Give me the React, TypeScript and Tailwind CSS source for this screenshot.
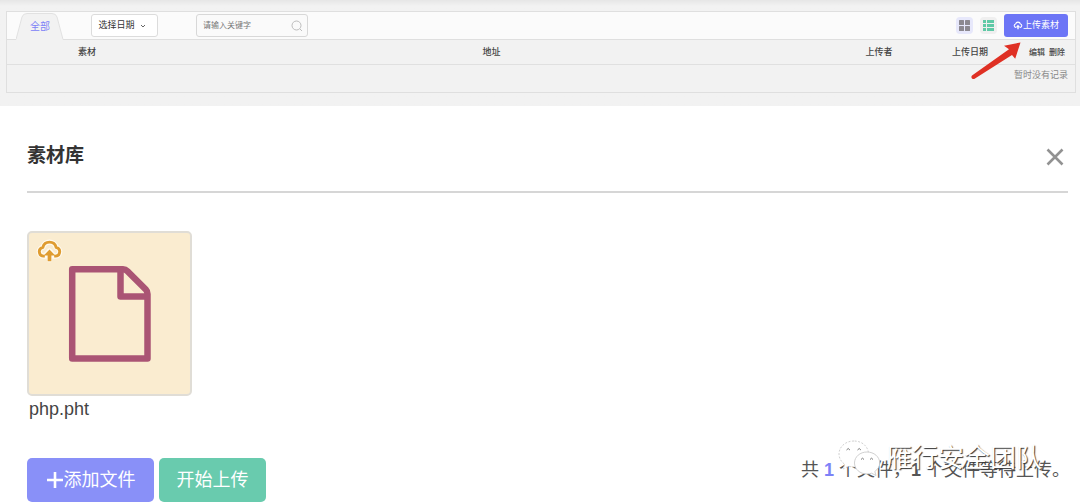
import { useState } from "react";

function CloudUpload({ className, halo = false }: { className: string; halo?: boolean }) {
  const cloud = "M7.5 15.5H6.2a4.3 4.3 0 0 1-.6-8.5 6.6 6.6 0 0 1 12.8 0 4.3 4.3 0 0 1-.6 8.5h-1.3";
  return (
    <svg viewBox="-1 0 26 24" className={className} fill="none" aria-hidden="true">
      {halo && (
        <g stroke="#fffaf0" strokeWidth="5" strokeLinejoin="round" strokeLinecap="round">
          <path d={cloud} />
          <path d="M12 19v-5M8 15l4-4.500 4 4.500z" />
        </g>
      )}
      <path d={cloud} stroke="currentColor" strokeWidth="2.800" />
      <path d="M12 9l5.500 6H13.800v5.500h-3.600V15H6.500z" fill="currentColor" />
    </svg>
  );
}

function Toolbar() {
  const [keyword, setKeyword] = useState("");
  return (
    <div className="flex h-7 items-center border-b border-[#dfdfdf] bg-[#fbfbfb] pr-[7px] pl-[9px]">
      <a
        href="#all"
        className="relative -mb-px flex h-[27px] w-12 items-center justify-center self-end text-[10px] text-[#7d82f7]"
      >
        <svg viewBox="0 0 48 27" className="absolute inset-0 h-full w-full" aria-hidden="true">
          <path
            d="M0 26.500L6 4Q7 .5 11 .5H36Q40 .5 41 4L47 26.500V27H0Z"
            fill="#f2f2f2"
          />
          <path d="M0 26.500L6 4Q7 .5 11 .5H36Q40 .5 41 4L47 26.500" fill="none" stroke="#e1e1e1" />
        </svg>
        <span className="relative">全部</span>
      </a>
      <button
        type="button"
        className="ml-[27px] flex h-[23px] w-[67px] items-center justify-center gap-1 rounded-[3px] border border-[#dcdcdc] bg-white pr-1 text-[9px] text-[#333]"
      >
        选择日期
        <svg viewBox="0 0 8 8" className="size-2" fill="none" stroke="#666" aria-hidden="true">
          <path d="M2 3l2 2 2-2" />
        </svg>
      </button>
      <label className="ml-[38px] flex h-[23px] w-28 items-center rounded-[3px] border border-[#d8d8d8] bg-[#fafafa] pr-1 pl-1.5">
        <input
          type="text"
          aria-label="关键字"
          placeholder="请输入关键字"
          value={keyword}
          onChange={(e) => setKeyword(e.target.value)}
          className="min-w-0 flex-1 bg-transparent text-[8px] text-[#333] outline-none placeholder:text-[#777]"
        />
        <svg viewBox="0 0 12 12" className="size-3" fill="none" stroke="#bdbdbd" aria-hidden="true">
          <circle cx="5.500" cy="5.500" r="4.500" />
          <path d="M9 9l2 2" />
        </svg>
      </label>
      <div className="ml-auto flex items-center">
        <button
          type="button"
          aria-label="网格视图"
          className="flex size-[17px] items-center justify-center rounded-sm bg-[#e7e8fb]"
        >
          <svg viewBox="0 0 11 11" className="size-[11px]" fill="#8c8990" aria-hidden="true">
            <rect width="5" height="5" rx=".5" />
            <rect x="6" width="5" height="5" rx=".5" />
            <rect y="6" width="5" height="5" rx=".5" />
            <rect x="6" y="6" width="5" height="5" rx=".5" />
          </svg>
        </button>
        <button
          type="button"
          aria-label="列表视图"
          className="ml-[7px] flex size-[17px] items-center justify-center rounded-sm bg-[#efefef]"
        >
          <svg viewBox="0 0 11 11" className="size-[11px]" fill="#5ec9a6" aria-hidden="true">
            <path d="M0 0h3v3H0zM4 0h7v3H4zM0 4h3v3H0zM4 4h7v3H4zM0 8h3v3H0zM4 8h7v3H4z" />
          </svg>
        </button>
        <button
          type="button"
          className="ml-[7px] flex h-[23px] w-16 items-center justify-center rounded-[3px] bg-[#6c75f6] text-[9px] text-white"
        >
          <CloudUpload className="size-[10px]" />
          上传素材
        </button>
      </div>
    </div>
  );
}

function MaterialTable() {
  return (
    <table className="w-full table-fixed border-collapse text-[9px] text-[#444]">
      <colgroup>
        <col className="w-[15%]" />
        <col />
        <col className="w-[126px]" />
        <col className="w-14" />
        <col className="w-[49px]" />
        <col className="w-7" />
      </colgroup>
      <thead>
        <tr className="h-6 border-b border-[#e0e0e0]">
          <th className="p-0 pt-0.5 font-medium">素材</th>
          <th className="p-0 pt-0.5 font-medium">地址</th>
          <th className="p-0 pt-0.5 font-medium">上传者</th>
          <th className="p-0 pt-0.5 font-medium">上传日期</th>
          <th className="p-0 pt-0.5 pr-0.5 text-right text-[8px] font-medium">编辑</th>
          <th className="p-0 pt-0.5 pl-0.5 text-left text-[8px] font-medium">删除</th>
        </tr>
      </thead>
      <tbody>
        <tr className="h-7">
          <td colSpan={6} className="p-0 pr-[7px] pb-1.5 text-right text-[#888]">
            暂时没有记录
          </td>
        </tr>
      </tbody>
    </table>
  );
}

function FileCard() {
  return (
    <figure className="w-[165px]">
      <div className="relative flex h-[165px] items-center justify-center rounded-[5px] border-2 border-[#e0ddd6] bg-[#faecd0]">
        <CloudUpload halo className="absolute top-1.5 left-[7px] size-[27px] text-[#df9c31]" />
        <svg
          viewBox="0 0 84 98"
          className="h-[98px] w-[84px]"
          fill="none"
          stroke="#aa5474"
          strokeWidth="6.500"
          strokeLinejoin="round"
          aria-hidden="true"
        >
          <path d="M4.200 4.200H55Q57.500 4.200 59.500 6.200L77.800 24.500Q79.500 26.200 79.500 29V93.500H4.200Z" />
          <path d="M52.500 4.200V31.500H79.500" />
        </svg>
      </div>
      <figcaption className="px-0.5 text-[18px] leading-[27px] text-[#444]">php.pht</figcaption>
    </figure>
  );
}

function Watermark() {
  return (
    <div className="pointer-events-none absolute -top-4 right-7 flex items-center gap-1" aria-hidden="true">
      <svg viewBox="0 0 44 36" className="h-9 w-11" fill="#fff" stroke="#c4c4c4" strokeWidth=".8">
        <path
          d="M16 1C7.500 1 1 6.800 1 14c0 4.200 2.200 7.800 5.600 10.200L5.200 29l5.400-2.800c1.700.5 3.500.8 5.400.8 8.300 0 14.500-5.800 14.500-13S24.300 1 16 1Z"
          strokeDasharray="2 1.500"
        />
        <path d="M29 12c-7 0-12.500 4.800-12.500 11S22 34 29 34c1.700 0 3.200-.3 4.600-.8L38 35.500l-1.200-4c3-2.100 4.900-5.100 4.900-8.500C41.700 16.800 36 12 29 12Z" />
        <g fill="none" stroke="#777" strokeWidth="1">
          <path d="M8.500 10q1.700-3 3.400 0M19.500 10q1.700-3 3.400 0M23 19.500q1.500-2.600 3 0M32 19.500q1.500-2.600 3 0" />
        </g>
      </svg>
      <span className="text-[26px] leading-9 text-white [text-shadow:1px_1px_1px_#333]">
        雁行安全团队
      </span>
    </div>
  );
}

export default function App() {
  return (
    <div className="bg-white font-['Liberation_Sans','Noto_Sans_CJK_SC',sans-serif]">
      <section className="bg-[#f2f2f2] bg-linear-to-b from-[#e6e6e6] to-[#f2f2f2] to-[6px] pt-[11px] pr-1 pb-[13px] pl-1.5">
        <div className="relative border border-[#dfdfdf] bg-[#f2f2f2]">
          <Toolbar />
          <MaterialTable />
          <svg
            viewBox="0 0 52 38"
            className="pointer-events-none absolute top-[29px] right-[53px] h-[38px] w-[52px]"
            fill="#df3024"
            aria-hidden="true"
          >
            <path d="M50.500 1.500L34 4.700L39 8.200L2 34.500Q.8 36 2 37.500Q3.500 38.500 5 37.500L42 14L45.200 17.800Z" />
          </svg>
        </div>
      </section>

      <section className="pr-3 pb-0.5 pl-[27px]">
        <header className="flex h-[87px] items-center justify-between border-b-2 border-[#d6d6d6] pt-4 pr-[3px]">
          <h2 className="text-[19px] font-bold text-[#333]">素材库</h2>
          <button type="button" aria-label="关闭" className="flex size-5 items-center justify-center">
            <svg viewBox="0 0 20 20" className="size-5" stroke="#929292" strokeWidth="2.600" aria-hidden="true">
              <path d="M2.500 2.500l15 15M17.500 2.500l-15 15" />
            </svg>
          </button>
        </header>

        <div className="pt-[38px]">
          <FileCard />
        </div>

        <footer className="flex items-center justify-between pt-[35px]">
          <div className="flex gap-[5px]">
            <button
              type="button"
              className="flex h-11 w-[127px] items-center justify-center rounded-[5px] bg-[#8990f8] text-[18px] text-white"
            >
              <svg viewBox="0 0 18 18" className="size-[18px]" stroke="currentColor" strokeWidth="2.600" aria-hidden="true">
                <path d="M9 1v16M1 9h16" />
              </svg>
              添加文件
            </button>
            <button
              type="button"
              className="flex h-11 w-[107px] items-center justify-center rounded-[5px] bg-[#69cbae] text-[18px] text-white"
            >
              开始上传
            </button>
          </div>
          <div className="relative -mt-5 -mr-0.5">
            <p className="text-[18px] leading-7 text-[#555]">
              共 <strong className="text-[#7d82f7]">1</strong> 个文件，<strong>1</strong> 个文件等待上传。
            </p>
            <Watermark />
          </div>
        </footer>
      </section>
    </div>
  );
}
